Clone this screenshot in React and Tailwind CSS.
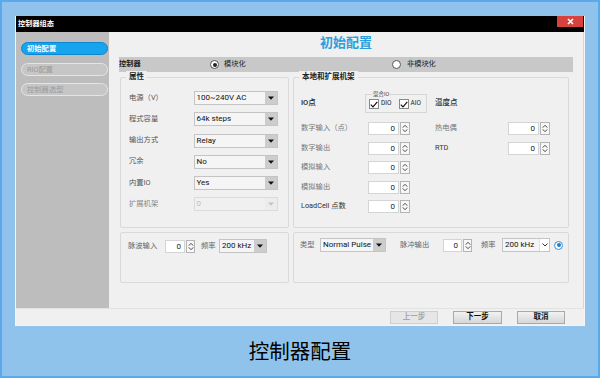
import React from "react";

const font = "font-['Roboto','Noto_Sans_CJK_SC',sans-serif]";

const DownTri = ({ light }) => (
  <svg width="6" height="4" viewBox="0 0 6 4">
    <path d="M0 0.5h6L3 3.8z" fill={light ? "#c4c4c4" : "#111"} />
  </svg>
);

const Select = ({ value, className = "", disabled, thin }) => (
  <div
    className={`flex h-[14px] border ${
      disabled ? "border-[#dadada] bg-[#f0f0f0]" : "border-[#c4c4c4] bg-[#f5f5f5]"
    } ${className}`}
  >
    <div
      className={`flex-1 pl-[2px] text-[8px] leading-[12px] whitespace-nowrap overflow-hidden ${
        disabled ? "text-[#c0c0c0]" : "text-[#111]"
      }`}
    >
      {value}
    </div>
    {thin ? (
      <div className="w-[10px] flex items-center justify-center border-l border-[#e0e0e0] bg-white">
        <svg width="6" height="4" viewBox="0 0 6 4">
          <path d="M0.5 0.5L3 3L5.5 0.5" fill="none" stroke="#333" strokeWidth="1" />
        </svg>
      </div>
    ) : (
      <div
        className={`w-[12px] flex items-center justify-center ${
          disabled ? "bg-[#ececec]" : "bg-[#cdcdcd]"
        }`}
      >
        <DownTri light={disabled} />
      </div>
    )}
  </div>
);

const Spin = ({ className = "", arrowW = "w-[10px]" }) => (
  <div className={`flex h-[13px] gap-[1px] ${className}`}>
    <div className="flex-1 bg-white border border-[#d4d4d4] text-right pr-[3px] text-[8px] leading-[11px] text-[#222]">
      0
    </div>
    <div
      className={`${arrowW} border border-[#b4b4b4] bg-[#f7f7f7] flex flex-col items-center justify-center gap-[1px]`}
    >
      <svg width="6" height="3" viewBox="0 0 6 3">
        <path d="M0.5 2.7L3 0.4L5.5 2.7" fill="none" stroke="#444" strokeWidth="0.9" />
      </svg>
      <svg width="6" height="3" viewBox="0 0 6 3">
        <path d="M0.5 0.3L3 2.6L5.5 0.3" fill="none" stroke="#444" strokeWidth="0.9" />
      </svg>
    </div>
  </div>
);

const Radio = ({ checked, blue }) => (
  <span
    className={`flex h-[9px] w-[9px] items-center justify-center rounded-full border bg-white ${
      blue ? "border-[#3b8fd6]" : "border-[#555]"
    }`}
  >
    {checked && (
      <span className={`h-[4px] w-[4px] rounded-full ${blue ? "bg-[#1a7fd8]" : "bg-[#222]"}`} />
    )}
  </span>
);

const Check = ({ label }) => (
  <div className="flex items-center gap-[2px]">
    <span className="flex h-[10px] w-[10px] items-center justify-center border border-[#888] bg-white">
      <svg width="8" height="7" viewBox="0 0 8 7">
        <path d="M0.8 3.6L3 5.8L7.3 0.8" fill="none" stroke="#111" strokeWidth="1.2" />
      </svg>
    </span>
    <span className="text-[6.5px] text-[#222]">{label}</span>
  </div>
);

const Group = ({ title, className = "", children }) => (
  <div className={`relative border border-[#d9d9d9] rounded-[2px] ${className}`}>
    {title && (
      <span className="absolute -top-[7px] left-[5px] bg-[#f0f0f0] px-[3px] text-[7.5px] font-bold leading-[12px] text-[#222]">
        {title}
      </span>
    )}
    {children}
  </div>
);

const leftRows = [
  ["电源（V）", "100~240V AC"],
  ["程式容量", "64k steps"],
  ["输出方式", "Relay"],
  ["冗余", "No"],
  ["内置IO", "Yes"],
  ["扩展机架", "0", true],
];

const ioRows = [
  ["数字输入（点）", "热电偶"],
  ["数字输出", "RTD"],
  ["模拟输入"],
  ["模拟输出"],
  ["LoadCell 点数"],
];

const SideItem = ({ label, active }) => (
  <div
    className={`h-[13px] w-[87px] rounded-full border pl-[5px] text-[7.3px] leading-[11px] ${
      active
        ? "border-[#0e86cf] bg-[#17a4ef] text-white font-bold"
        : "border-[#e4e4e4] bg-[#c6c6c6] text-[#9a9a9a]"
    }`}
  >
    {label}
  </div>
);

const Btn = ({ label, disabled, w = "w-[48px]" }) => (
  <div
    className={`${w} h-[13px] flex items-center justify-center border text-[7.5px] font-bold ${
      disabled
        ? "border-[#cfcfcf] bg-[#e6e6e6] text-[#a8a8a8]"
        : "border-[#a9a9a9] bg-gradient-to-b from-[#f2f2f2] to-[#d6d6d6] text-[#111]"
    }`}
  >
    {label}
  </div>
);

export default function App() {
  return (
    <div className={`w-[600px] h-[378px] bg-[#8fc3eb] border-2 border-[#5aa9ec] flex flex-col ${font}`}>
      <div className="ml-[13px] mt-[14px] w-[570px] h-[310px] flex flex-col border-x border-b border-[#f4f4f4] bg-[#f0f0f0]">
        {/* title bar */}
        <div className="h-[16px] bg-black flex items-start justify-between">
          <span className="pl-[2px] text-[7.2px] font-bold leading-[16px] text-white">控制器组态</span>
          <div className="mr-[1px] h-[11px] w-[26px] bg-[#d9413e] flex items-center justify-center">
            <svg width="7" height="7" viewBox="0 0 7 7">
              <path d="M1 1L6 6M6 1L1 6" stroke="white" strokeWidth="1.6" />
            </svg>
          </div>
        </div>

        <div className="flex h-[276px]">
          {/* sidebar */}
          <div className="w-[93px] bg-[#bdbdbd] pl-[5px] pt-[10px] flex flex-col gap-[7.5px]">
            <SideItem label="初始配置" active />
            <SideItem label="RIO配置" />
            <SideItem label="控制器选型" />
          </div>

          {/* main */}
          <div className="flex-1 px-[10px] border-r border-[#d6d6d6]">
            <div className="h-[22px] flex items-center justify-center text-[13px] font-bold text-[#2a9fdc]">
              初始配置
            </div>
            <div className="mt-[3px] h-[15px] bg-[#c8c8c8] flex items-center text-[7.2px] text-[#222]">
              <span className="w-[91px] font-bold">控制器</span>
              <Radio checked />
              <span className="ml-[5px] w-[168px]">模块化</span>
              <Radio />
              <span className="ml-[6px]">非模块化</span>
            </div>

            <div className="mt-[5px] flex gap-[4px] pl-[1px]">
              <div className="flex flex-col gap-[4px]">
                <Group title="属性" className="w-[169px] h-[151px] pt-[13px] pl-[8px] pr-[10px]">
                  <div className="flex flex-col gap-[7.3px]">
                    {leftRows.map(([l, v, d]) => (
                      <div key={l} className="flex items-center">
                        <span className={`w-[65px] text-[7.3px] ${d ? "text-[#888]" : "text-[#555]"}`}>{l}</span>
                        <Select value={v} disabled={d} className="w-[85px]" />
                      </div>
                    ))}
                  </div>
                </Group>
                <Group className="w-[169px] h-[51px] pt-[6px] pl-[7px]">
                  <div className="flex items-center">
                    <span className="w-[37px] text-[7.3px] text-[#666]">脉波输入</span>
                    <Spin className="w-[30px]" arrowW="w-[9px]" />
                    <span className="ml-[6px] w-[18px] text-[7.3px] text-[#666]">频率</span>
                    <Select value="200 kHz" className="w-[48px]" />
                  </div>
                </Group>
              </div>

              <div className="flex flex-col gap-[4px]">
                <Group title="本地和扩展机架" className="w-[276px] h-[151px] pt-[15px] pl-[7px]">
                  <div className="flex items-center h-[20px]">
                    <span className="w-[64px] text-[7.5px] font-medium text-[#222]">IO点</span>
                    <div className="relative w-[62px] h-[19px] border border-[#d6d6d6] flex items-center gap-[7px] pl-[3px] pt-[2px]">
                      <span className="absolute -top-[5px] left-[6px] bg-[#f0f0f0] px-[1px] text-[5.5px] leading-[8px] text-[#444]">
                        混合IO
                      </span>
                      <Check label="DIO" />
                      <Check label="AIO" />
                    </div>
                    <span className="ml-[8px] text-[7.5px] font-medium text-[#333]">温度点</span>
                  </div>
                  <div className="mt-[9px] flex flex-col gap-[6.5px]">
                    {ioRows.map(([l, r]) => (
                      <div key={l} className="flex items-center h-[13px]">
                        <span
                          className={`w-[67px] text-[7.3px] ${
                            l.startsWith("Load") ? "text-[#333]" : "text-[#777]"
                          }`}
                        >
                          {l}
                        </span>
                        <Spin className="w-[42px]" />
                        {r && (
                          <>
                            <span
                              className={`ml-[25px] w-[73px] text-[7.3px] ${
                                r === "RTD" ? "text-[#333]" : "text-[#777]"
                              }`}
                            >
                              {r}
                            </span>
                            <Spin className="w-[42px]" />
                          </>
                        )}
                      </div>
                    ))}
                  </div>
                </Group>
                <Group className="w-[276px] h-[51px] pt-[5px] pl-[6px]">
                  <div className="flex items-center">
                    <span className="w-[20px] text-[7.3px] text-[#666]">类型</span>
                    <Select value="Normal Pulse" className="w-[66px]" />
                    <span className="ml-[14px] w-[43px] text-[7.3px] text-[#666]">脉冲输出</span>
                    <Spin className="w-[29px]" arrowW="w-[9px]" />
                    <span className="ml-[9px] w-[21px] text-[7.3px] text-[#666]">频率</span>
                    <Select value="200 kHz" className="w-[48px]" thin />
                    <span className="ml-[4px]">
                      <Radio checked blue />
                    </span>
                  </div>
                </Group>
              </div>
            </div>
          </div>
        </div>

        {/* footer */}
        <div className="flex-1 border-t border-[#e2e2e2] bg-[#f0f0f0] flex items-center justify-end gap-[15px] pr-[19px]">
          <Btn label="上一步" disabled />
          <Btn label="下一步" w="w-[49px]" />
          <Btn label="取消" />
        </div>
      </div>

      <div className="flex-1 flex items-center justify-center pt-[2px] text-[20.5px] text-black">
        控制器配置
      </div>
    </div>
  );
}
